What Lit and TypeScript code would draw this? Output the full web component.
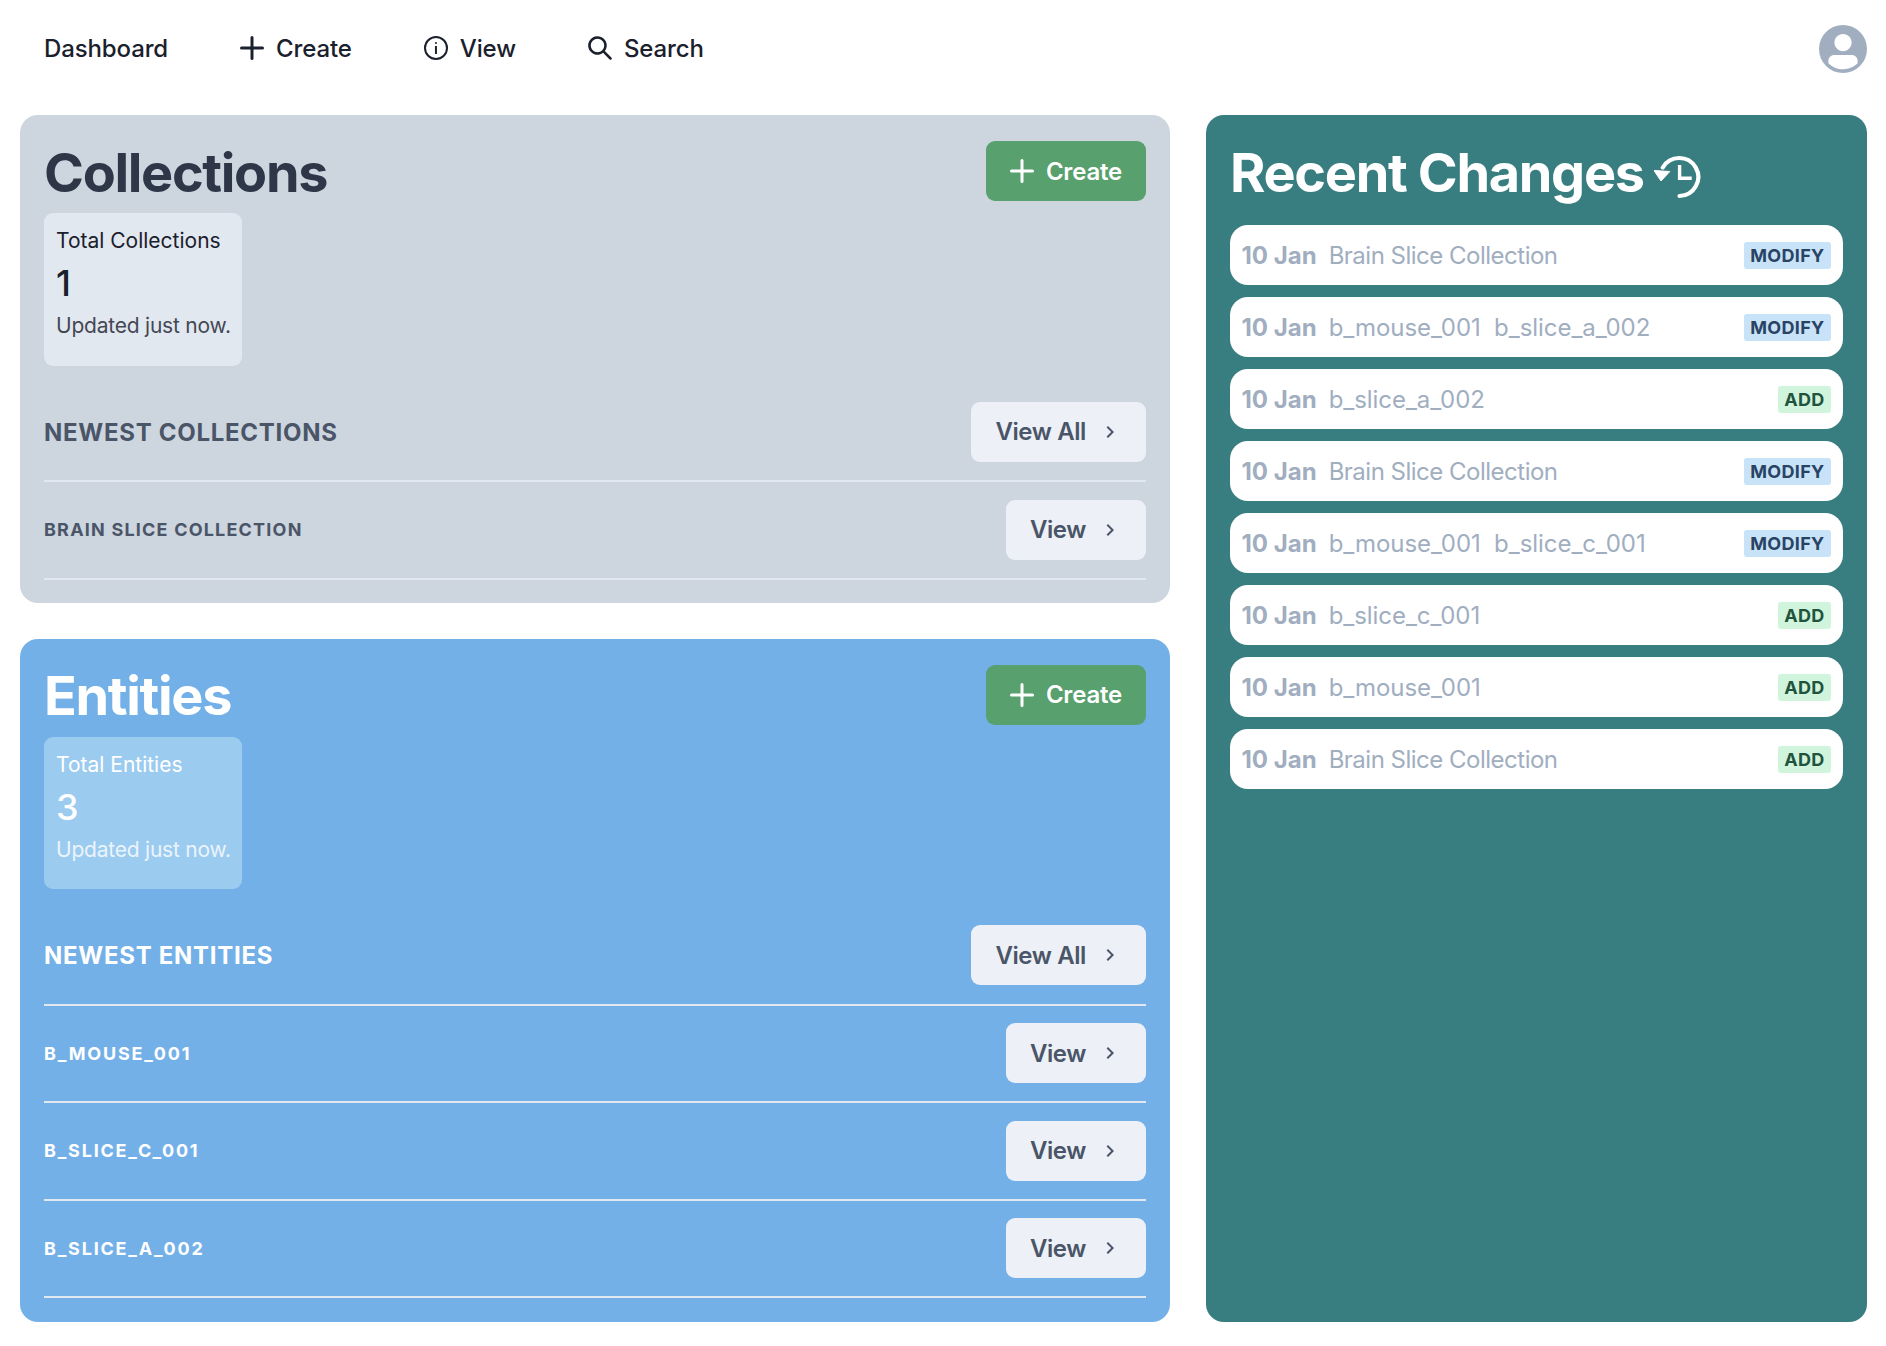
import { LitElement, html, css } from "lit";
import { customElement } from "lit/decorators.js";

const addIcon = html`<svg class="ic" viewBox="0 0 24 24"><path fill="currentColor" d="M0,12a1.5,1.5,0,0,0,1.5,1.5h8.75a.25.25,0,0,1,.25.25V22.5a1.5,1.5,0,0,0,3,0V13.75a.25.25,0,0,1,.25-.25H22.5a1.5,1.5,0,0,0,0-3H13.75a.25.25,0,0,1-.25-.25V1.5a1.5,1.5,0,0,0-3,0v8.75a.25.25,0,0,1-.25.25H1.5A1.5,1.5,0,0,0,0,12Z"/></svg>`;
const infoIcon = html`<svg class="ic" viewBox="0 0 24 24"><g fill="currentColor" stroke="currentColor" stroke-linecap="square" stroke-width="2"><circle cx="12" cy="12" fill="none" r="11"/><line fill="none" x1="11.959" x2="11.959" y1="11" y2="17"/><circle cx="11.959" cy="7" r="1" stroke="none"/></g></svg>`;
const searchIcon = html`<svg class="ic" viewBox="0 0 24 24"><path fill="currentColor" d="M23.384,21.619,16.855,15.09a9.284,9.284,0,1,0-1.768,1.768l6.529,6.529a1.266,1.266,0,0,0,1.768,0A1.251,1.251,0,0,0,23.384,21.619ZM2.75,9.5a6.75,6.75,0,1,1,6.75,6.75A6.758,6.758,0,0,1,2.75,9.5Z"/></svg>`;
const chevron = html`<svg class="chev" viewBox="0 0 24 24"><path fill="currentColor" d="M10 6L8.59 7.41 13.17 12l-4.58 4.59L10 18l6-6z"/></svg>`;
const avatar = html`<svg class="avatar-svg" viewBox="0 0 128 128"><path fill="#fff" d="M103,102.1388 C93.094,111.92 79.3504,118 64.1638,118 C48.8056,118 34.9294,111.768 25,101.7892 L25,95.2 C25,86.8096 31.981,80 40.6,80 L87.4,80 C96.019,80 103,86.8096 103,95.2 L103,102.1388 Z"/><path fill="#fff" d="M63.9961 24C51.2938 24 41 34.2943 41 46.9961C41 59.7019 51.2938 70 63.9961 70C76.6983 70 87 59.7019 87 46.9961C87 34.2943 76.6983 24 63.9961 24Z"/></svg>`;
const clock = html`<svg class="clock" viewBox="14 14 48 48"><g fill="none" stroke="currentColor" stroke-linecap="round"><path stroke-width="4.2" d="M22.8 27.5A19 19 0 1 1 39.5 56"/><path stroke-width="3.4" stroke-linecap="butt" d="M39.6 25V38.3H51.7"/></g><path fill="currentColor" stroke="currentColor" stroke-width="1" stroke-linejoin="round" d="M14 30.5 L29.8 31.5 L21 41 Z"/></svg>`;

const changes: [string, string][] = [
  ["Brain Slice Collection", "MODIFY"],
  ["b_mouse_001\u00a0\u00a0b_slice_a_002", "MODIFY"],
  ["b_slice_a_002", "ADD"],
  ["Brain Slice Collection", "MODIFY"],
  ["b_mouse_001\u00a0\u00a0b_slice_c_001", "MODIFY"],
  ["b_slice_c_001", "ADD"],
  ["b_mouse_001", "ADD"],
  ["Brain Slice Collection", "ADD"],
];

@customElement("app-root")
export class AppRoot extends LitElement {
  static styles = css`
    :host { display: block; font-family: Inter, "Liberation Sans", sans-serif; color: #1a202c; background: #fff; height: 1346px; box-sizing: border-box; }
    * { box-sizing: border-box; }
    nav { height: 115px; display: flex; align-items: center; padding: 0 19px 19px 44px; gap: 72px; font-size: 24px; font-weight: 500; letter-spacing: -0.12px; }
    nav .item { display: flex; align-items: center; gap: 12px; }
    nav .ic { width: 24px; height: 24px; }
    nav .avatar { margin-left: auto; margin-top: 2px; }
    .avatar { width: 48px; height: 48px; border-radius: 50%; background: #a0aec0; overflow: hidden; display: flex; }
    .avatar-svg { width: 48px; height: 48px; display: block; }
    .main { display: grid; grid-template-columns: 1150px 660.5px; gap: 36px; padding: 0 19.5px 0 20px; height: 1207px; }
    .left { display: flex; flex-direction: column; gap: 36px; }
    .card { border-radius: 18px; padding: 26px 24px 23px; }
    .gray { background: #cdd5df; color: #2d3748; }
    .blue { background: #74b0e8; color: #fff; flex: 1; }
    .head { display: flex; justify-content: space-between; align-items: center; height: 60px; }
    h1 { margin: 3px 0 0; font-size: 54px; line-height: 60px; font-weight: 700; letter-spacing: -1.32px; }
    .btn { display: inline-flex; align-items: center; height: 60px; padding: 0 24px; border-radius: 9px; font-size: 24px; font-weight: 600; background: #edf1f7; color: #4a5568; letter-spacing: -0.4px; }
    .btn.green { background: #58a06e; color: #fff; gap: 12px; letter-spacing: -0.2px; }
    .btn.green .ic { width: 24px; height: 24px; }
    .chev { width: 24px; height: 24px; margin-left: 12px; }
    .stat { width: 198px; height: 152.5px; margin-top: 12px; border-radius: 9px; padding: 13px 12px 12px; font-size: 21px; line-height: 30px; white-space: nowrap; }
    .gray .stat { background: #e2e8f0; color: #1a202c; }
    .blue .stat { background: #9ccbf0; color: #fff; }
    .stat .label { font-weight: 400; }
    .stat .num { font-size: 36px; line-height: 55px; font-weight: 500; }
    .stat .help { opacity: 0.8; letter-spacing: -0.22px; }
    .section { display: flex; justify-content: space-between; align-items: center; margin-top: 36px; height: 60px; }
    .section h2 { margin: 1px 0 0; font-size: 24px; letter-spacing: 0.72px; font-weight: 700; color: #4a5568; }
    .blue .section h2 { color: #fff; }
    .rows { margin-top: 18.5px; border-top: 2px solid #e2e8f0; }
    .row { display: flex; justify-content: space-between; align-items: center; height: 97.5px; border-bottom: 2px solid #e2e8f0; }
    .row .name { font-size: 18px; font-weight: 700; letter-spacing: 1.8px; color: #fff; }
    .gray .row .name { letter-spacing: 1.2px; color: #4a5568; }
    .teal { background: #387d7f; color: #fff; }
    .title { display: flex; align-items: center; gap: 10px; height: 60px; }
    .clock { width: 48px; height: 48px; margin-top: 14px; }
    .list { display: flex; flex-direction: column; gap: 12px; margin-top: 24px; }
    .change { height: 60px; background: #fff; border-radius: 18px; padding: 0 12px 0 11.5px; display: flex; align-items: center; font-size: 24px; color: #a0aec0; }
    .change b { font-weight: 700; margin-right: 12px; }
    .change .words { letter-spacing: -0.5px; }
    .change .ids { letter-spacing: -0.05px; }
    .tag { margin-left: auto; padding: 0 6px; font-size: 18px; line-height: 27px; font-weight: 700; letter-spacing: 0.3px; border-radius: 3px; }
    .tag.MODIFY { background: #c8e3f8; color: #2a4365; }
    .tag.ADD { background: #d0f5dc; color: #22543d; }
  `;

  section(cls: string, title: string, label: string, num: string, newest: string, rows: string[]) {
    return html`<section class="card ${cls}">
      <div class="head"><h1>${title}</h1><span class="btn green">${addIcon}Create</span></div>
      <div class="stat"><div class="label">${label}</div><div class="num">${num}</div><div class="help">Updated just now.</div></div>
      <div class="section"><h2>${newest}</h2><span class="btn">View All${chevron}</span></div>
      <div class="rows">${rows.map(r => html`<div class="row"><span class="name">${r}</span><span class="btn">View${chevron}</span></div>`)}</div>
    </section>`;
  }

  render() {
    return html`
      <nav>
        <span class="item">Dashboard</span>
        <span class="item">${addIcon}Create</span>
        <span class="item">${infoIcon}View</span>
        <span class="item">${searchIcon}Search</span>
        <span class="avatar">${avatar}</span>
      </nav>
      <div class="main">
        <div class="left">
          ${this.section("gray", "Collections", "Total Collections", "1", "NEWEST COLLECTIONS", ["BRAIN SLICE COLLECTION"])}
          ${this.section("blue", "Entities", "Total Entities", "3", "NEWEST ENTITIES", ["B_MOUSE_001", "B_SLICE_C_001", "B_SLICE_A_002"])}
        </div>
        <section class="card teal">
          <div class="title"><h1>Recent Changes</h1>${clock}</div>
          <div class="list">
            ${changes.map(([n, t]) => html`<div class="change"><b>10 Jan</b><span class=${n.includes("_") ? "ids" : "words"}>${n}</span><span class="tag ${t}">${t}</span></div>`)}
          </div>
        </section>
      </div>`;
  }
}
